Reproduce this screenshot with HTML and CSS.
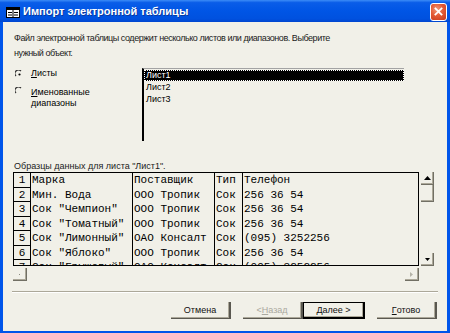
FILE: index.html
```html
<!DOCTYPE html>
<html lang="ru">
<head>
<meta charset="utf-8">
<title>Импорт электронной таблицы</title>
<link rel="stylesheet" href="styles.css">
</head>
<body>
<div class="window">
  <div class="titlebar">
    <svg class="app-icon" width="14" height="11" viewBox="0 0 14 11">
      <rect x="0.5" y="0.5" width="13" height="10" fill="#fff" stroke="#000"/>
      <rect x="1" y="1" width="12" height="2" fill="#000"/>
      <line x1="7" y1="3" x2="7" y2="10" stroke="#000"/>
      <line x1="2" y1="5.5" x2="6" y2="5.5" stroke="#000"/>
      <line x1="8" y1="5.5" x2="12" y2="5.5" stroke="#000"/>
      <line x1="2" y1="8" x2="6" y2="8" stroke="#000"/>
      <line x1="8" y1="8" x2="12" y2="8" stroke="#000"/>
    </svg>
    <span class="title">Импорт электронной таблицы</span>
    <div class="close">
      <svg width="17" height="17" viewBox="0 0 17 17">
        <path d="M5 5 L12 12 M12 5 L5 12" stroke="#fff" stroke-width="2" stroke-linecap="square"/>
      </svg>
    </div>
  </div>
  <div class="frame">
    <p class="intro">Файл электронной таблицы содержит несколько листов или диапазонов. Выберите<br>нужный объект.</p>
    <div class="choose">
      <div class="options">
        <div class="opt">
          <svg class="radio" width="8" height="8" viewBox="0 0 8 8">
            <path d="M1 6 A3.5 3.5 0 0 1 6 1" fill="none" stroke="#333" stroke-width="1.2"/>
            <circle cx="4.5" cy="4.5" r="1.1" fill="#000"/>
          </svg>
          <span class="opt-label"><u>Л</u>исты</span>
        </div>
        <div class="opt opt2">
          <svg class="radio" width="8" height="8" viewBox="0 0 8 8">
            <path d="M1 6 A3.5 3.5 0 0 1 6 1" fill="none" stroke="#333" stroke-width="1.2"/>
          </svg>
          <span class="opt-label"><u>И</u>менованные<br>диапазоны</span>
        </div>
      </div>
      <div class="listbox">
        <div class="item sel">Лист1</div>
        <div class="item">Лист2</div>
        <div class="item">Лист3</div>
      </div>
    </div>
    <div class="caption">Образцы данных для листа "Лист1".</div>
    <div class="grid-area">
      <div class="grid">
        <div class="num">1</div><div class="c">Марка</div><div class="c">Поставщик</div><div class="c">Тип</div><div class="c last">Телефон</div>
        <div class="num">2</div><div class="c">Мин. Вода</div><div class="c">ООО Тропик</div><div class="c">Сок</div><div class="c last">256 36 54</div>
        <div class="num">3</div><div class="c">Сок "Чемпион"</div><div class="c">ООО Тропик</div><div class="c">Сок</div><div class="c last">256 36 54</div>
        <div class="num">4</div><div class="c">Сок "Томатный"</div><div class="c">ООО Тропик</div><div class="c">Сок</div><div class="c last">256 36 54</div>
        <div class="num">5</div><div class="c">Сок "Лимонный"</div><div class="c">ОАО Консалт</div><div class="c">Сок</div><div class="c last">(095) 3252256</div>
        <div class="num">6</div><div class="c">Сок "Яблоко"</div><div class="c">ООО Тропик</div><div class="c">Сок</div><div class="c last">256 36 54</div>
        <div class="num">7</div><div class="c">Сок "Грушевый"</div><div class="c">ОАО Консалт</div><div class="c">Сок</div><div class="c last">(095) 3252256</div>
      </div>
      <div class="vscroll">
        <div class="sbtn">
          <svg width="7" height="4" viewBox="0 0 7 4"><path d="M3.5 0 L7 4 L0 4 Z" fill="#000"/></svg>
        </div>
        <div class="sbtn thumb"></div>
        <div class="track"></div>
        <div class="sbtn">
          <svg width="5" height="3" viewBox="0 0 5 3"><path d="M0 0 L5 0 L2.5 3 Z" fill="#000"/></svg>
        </div>
      </div>
    </div>
    <div class="hscroll">
      <div class="sbtn hbtn">
        <svg width="3" height="3" viewBox="0 0 3 3"><rect x="1" y="1" width="1" height="1" fill="#8a897f"/></svg>
      </div>
      <div class="htrack"></div>
      <div class="sbtn hbtn">
        <svg width="3" height="5" viewBox="0 0 3 5"><path d="M0 0 L3 2.5 L0 5 Z" fill="#b5b3a8"/></svg>
      </div>
    </div>
    <div class="sep"></div>
    <div class="buttons">
      <div class="btn">Отмена</div>
      <div class="btn gap btn-disabled">&lt; <u>Н</u>азад</div>
      <div class="btn btn-default"><u>Д</u>алее &gt;</div>
      <div class="btn gap"><u>Г</u>отово</div>
    </div>
  </div>
</div>
</body>
</html>
```
FILE: styles.css
```css
* { box-sizing: border-box; margin: 0; padding: 0; }
html, body { width: 450px; height: 333px; overflow: hidden; background: #f1f0e8; }
body { font-family: "Liberation Sans", Arial, sans-serif; font-size: 9px; color: #000; }
u { text-decoration: underline; }

.window {
  width: 450px; height: 333px;
  display: flex; flex-direction: column;
  background: #001e9e;
}

.titlebar {
  height: 22px; flex: none;
  display: flex; align-items: center;
  padding: 0 3px 0 6px;
  background: linear-gradient(#3c8cf7 0%, #0a5de8 12%, #0055e5 50%, #0051df 85%, #0046d0 100%);
}
.app-icon { flex: none; margin-top: 2px; }
.title {
  margin-left: 3px;
  color: #fff; font-weight: bold; font-size: 11px;
  text-shadow: 1px 1px #0a3a9e;
  flex: 1;
}
.close {
  width: 17px; height: 18px; flex: none;
  margin-top: 1px;
  border: 1px solid #fff; border-radius: 3px;
  background: radial-gradient(circle at 40% 35%, #f09a7c 0%, #e35b36 45%, #c6381a 100%);
  display: flex; align-items: center; justify-content: center;
}

.frame {
  flex: 1;
  background: #f1f0e8;
  border: solid #0055ea; border-width: 0 3px 2px 3px;
  display: flex; flex-direction: column;
}

.intro {
  margin: 9px 0 0 11px;
  line-height: 14.5px;
  letter-spacing: -0.45px;
  color: #1b1b1b;
}

.choose { display: flex; margin-top: 8px; }
.options { width: 139px; padding-left: 12px; }
.opt { display: flex; align-items: flex-start; }
.opt2 { margin-top: 7px; }
.radio { flex: none; margin-top: 2px; }
.opt-label { margin-left: 8px; line-height: 11.5px; }
.opt2 .radio { margin-top: 0; }

.listbox {
  width: 262px; height: 73px;
  border-top: 1px solid #a3a3a3;
  border-left: 2px solid #000;
  padding-top: 1px;
}
.item { height: 12px; line-height: 11px; padding-left: 2px; }
.item.sel {
  height: 11px;
  background: #000; color: #fff;
  outline: 1px dotted #fff; outline-offset: -1px;
  margin-bottom: 1px;
}

.caption { margin: 19px 0 0 11px; line-height: 12px; color: #1b1b1b; }

.grid-area { display: flex; margin-left: 10px; height: 94px; }
.grid {
  width: 406px; height: 94px; overflow: hidden;
  border: 1px solid #000;
  display: grid;
  grid-template-columns: 17px 102px 82px 28px 1fr;
  grid-auto-rows: 14.5px;
  font-family: "Liberation Mono", "Courier New", monospace;
  font-size: 11px;
  line-height: 14px;
}
.num {
  border-right: 1px solid #000; border-bottom: 1px solid #000;
  text-align: center;
}
.c { border-right: 1px solid #000; padding-left: 1px; white-space: nowrap; overflow: hidden; }
.c.last { border-right: 0; }

.vscroll { width: 13px; margin-left: 2px; display: flex; flex-direction: column; }
.sbtn {
  width: 13px; height: 13px; flex: none;
  border-right: 1px solid #716f64; border-bottom: 1px solid #716f64;
  box-shadow: inset -1px -1px #aca899;
  display: flex; align-items: center; justify-content: center;
}
.thumb { height: 17px; }
.track { flex: 1; }

.hscroll { display: flex; margin: 2px 0 0 10px; width: 406px; height: 13px; }
.hbtn { width: 14px; }
.htrack { flex: 1; }

.sep { height: 1px; background: #aca899; margin: 10px 9px 0 9px; box-shadow: 0 1px #fff; }

.buttons { display: flex; justify-content: flex-end; margin: 10px 10px 0 0; }
.btn {
  width: 60px; height: 17px;
  display: flex; align-items: center; justify-content: center;
  border-right: 2px solid #5a5850; border-bottom: 1px solid #5a5850;
  box-shadow: inset -1px -1px #aca899;
  color: #111;
}
.btn.gap { margin-left: 12px; }
.btn-disabled { color: #aaa89f; }
.btn-default {
  width: 62px;
  border: 1px solid #000; border-right-width: 2px; border-bottom-width: 2px;
}
```
